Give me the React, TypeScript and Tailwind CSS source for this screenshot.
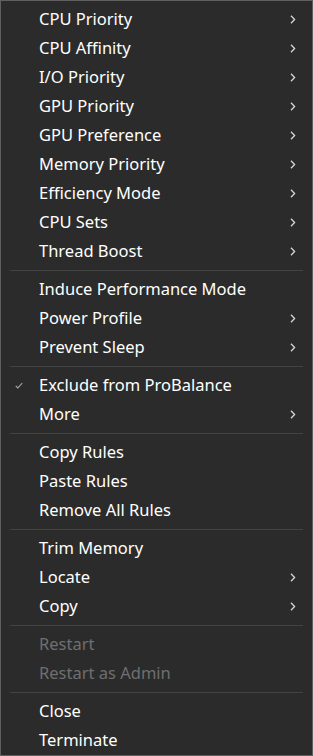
type Item = { label: string; sub?: boolean; checked?: boolean; disabled?: boolean };

const groups: Item[][] = [
  [
    { label: "CPU Priority", sub: true },
    { label: "CPU Affinity", sub: true },
    { label: "I/O Priority", sub: true },
    { label: "GPU Priority", sub: true },
    { label: "GPU Preference", sub: true },
    { label: "Memory Priority", sub: true },
    { label: "Efficiency Mode", sub: true },
    { label: "CPU Sets", sub: true },
    { label: "Thread Boost", sub: true },
  ],
  [
    { label: "Induce Performance Mode" },
    { label: "Power Profile", sub: true },
    { label: "Prevent Sleep", sub: true },
  ],
  [
    { label: "Exclude from ProBalance", checked: true },
    { label: "More", sub: true },
  ],
  [{ label: "Copy Rules" }, { label: "Paste Rules" }, { label: "Remove All Rules" }],
  [{ label: "Trim Memory" }, { label: "Locate", sub: true }, { label: "Copy", sub: true }],
  [
    { label: "Restart", disabled: true },
    { label: "Restart as Admin", disabled: true },
  ],
  [{ label: "Close" }, { label: "Terminate" }],
];

// small glyphs drawn to match the native menu
const CheckMark = () => (
  <svg className="absolute left-[14px] top-[11px] h-[7px] w-[8px]" viewBox="0 0 8 7" fill="none">
    <path d="M0.7 3.8L2.8 5.9L7.3 1" stroke="#a8a8a8" strokeWidth="1.1" />
  </svg>
);

const Chevron = () => (
  <svg className="absolute right-[16px] top-[10px] h-[9px] w-[6px]" viewBox="0 0 6 9" fill="none">
    <path d="M1 0.8L4.6 4.5L1 8.2" stroke="#d6d6d6" strokeWidth="1.3" />
  </svg>
);

const MenuRow = ({ item }: { item: Item }) => (
  <div className="relative flex h-[29px] items-center pl-[38px]">
    {item.checked && <CheckMark />}
    <span className={item.disabled ? "text-[#6f6f6f]" : "text-white"}>{item.label}</span>
    {item.sub && <Chevron />}
  </div>
);

export default function App() {
  return (
    <div
      className="h-[756px] w-[313px] border border-[#5f5f5f] bg-[#2b2b2b] pt-[4px] text-[16.5px]"
      style={{ fontFamily: '"Noto Sans", "Open Sans", sans-serif' }}
    >
      {groups.map((g, gi) => (
        <div key={gi}>
          {gi > 0 && (
            <div className="flex h-[9px] items-center px-[9px]">
              <div className="h-px w-full bg-[#434343]" />
            </div>
          )}
          {g.map((item) => (
            <MenuRow key={item.label} item={item} />
          ))}
        </div>
      ))}
    </div>
  );
}
